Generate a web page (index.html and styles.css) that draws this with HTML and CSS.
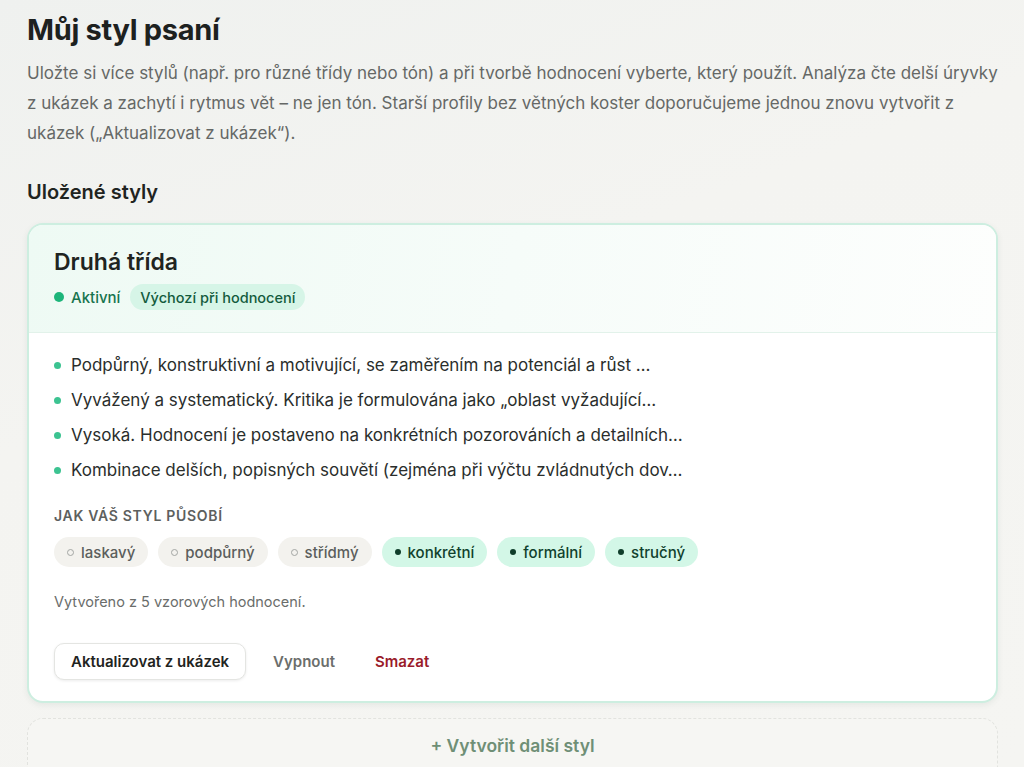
FILE: index.html
```html
<!DOCTYPE html>
<html lang="cs">
<head>
<meta charset="utf-8">
<title>Můj styl psaní</title>
<link rel="stylesheet" href="styles.css">
</head>
<body>
<main class="page">
  <h1 class="title">Můj styl psaní</h1>
  <p class="intro">Uložte si více stylů (např. pro různé třídy nebo tón) a při tvorbě hodnocení vyberte, který použít. Analýza čte delší úryvky z ukázek a zachytí i rytmus vět – ne jen tón. Starší profily bez větných koster doporučujeme jednou znovu vytvořit z ukázek („Aktualizovat z ukázek“).</p>

  <h2 class="section-title">Uložené styly</h2>

  <section class="card">
    <header class="card-head">
      <h3 class="card-title">Druhá třída</h3>
      <div class="status-row">
        <span class="status"><span class="status-dot"></span>Aktivní</span>
        <span class="badge">Výchozí při hodnocení</span>
      </div>
    </header>
    <div class="card-body">
      <ul class="traits">
        <li>Podpůrný, konstruktivní a motivující, se zaměřením na potenciál a růst …</li>
        <li>Vyvážený a systematický. Kritika je formulována jako „oblast vyžadující…</li>
        <li>Vysoká. Hodnocení je postaveno na konkrétních pozorováních a detailních…</li>
        <li>Kombinace delších, popisných souvětí (zejména při výčtu zvládnutých dov…</li>
      </ul>
      <div class="effect-label">Jak váš styl působí</div>
      <div class="chips">
        <span class="chip"><span class="mark"></span>laskavý</span>
        <span class="chip"><span class="mark"></span>podpůrný</span>
        <span class="chip"><span class="mark"></span>střídmý</span>
        <span class="chip on"><span class="mark"></span>konkrétní</span>
        <span class="chip on"><span class="mark"></span>formální</span>
        <span class="chip on"><span class="mark"></span>stručný</span>
      </div>
      <p class="meta">Vytvořeno z 5 vzorových hodnocení.</p>
      <div class="actions">
        <button class="btn-primary" type="button">Aktualizovat z ukázek</button>
        <button class="btn-text" type="button">Vypnout</button>
        <button class="btn-text danger" type="button">Smazat</button>
      </div>
    </div>
  </section>

  <div class="add-box">+ Vytvořit další styl</div>
</main>
</body>
</html>
```

FILE: styles.css
```css
* { box-sizing: border-box; }
html, body { margin: 0; padding: 0; }
body {
  background: linear-gradient(160deg, #eff1ef 0%, #f4f4f1 40%, #f5f5f2 100%);
  font-family: Inter, "Noto Sans", sans-serif;
  color: #1f2421;
  height: 767px;
  overflow: hidden;
}
.page { padding: 11px 26px 0 27px; }
.title {
  margin: 0;
  font-size: 29px;
  font-weight: 700;
  letter-spacing: -0.3px;
  line-height: 38px;
  color: #1d211f;
}
.intro {
  margin: 9px 0 0;
  font-size: 17px;
  line-height: 30px;
  color: #656866;
}
.section-title {
  margin: 31px 0 0;
  font-size: 20px;
  font-weight: 600;
  line-height: 26px;
  color: #1f2421;
}
.card {
  margin-top: 18px;
  background: #fff;
  border: 2px solid #cdeee0;
  border-radius: 16px;
  box-shadow: 0 2px 6px rgba(40, 80, 60, 0.08);
  overflow: hidden;
}
.card-head {
  padding: 22px 25px 22px;
  background: linear-gradient(100deg, #eefaf4 0%, #f6fcf9 50%, #fdfefd 100%);
  border-bottom: 1px solid #e2f2ea;
}
.card-title {
  margin: 0;
  font-size: 23px;
  font-weight: 600;
  line-height: 30px;
  color: #1f2421;
}
.status-row {
  display: flex;
  align-items: center;
  gap: 10px;
  margin-top: 7px;
}
.status {
  display: flex;
  align-items: center;
  gap: 7px;
  font-size: 15px;
  font-weight: 500;
  color: #17744e;
}
.status-dot {
  width: 10px;
  height: 10px;
  border-radius: 50%;
  background: #1db57a;
}
.badge {
  height: 26px;
  display: flex;
  align-items: center;
  padding: 0 10px;
  border-radius: 999px;
  background: #d6f5e7;
  color: #135b3d;
  font-size: 14.5px;
  font-weight: 500;
}
.card-body { padding: 15px 25px 21px; }
.traits {
  list-style: none;
  margin: 0;
  padding: 0;
}
.traits li {
  position: relative;
  padding-left: 17px;
  font-size: 17px;
  line-height: 35px;
  color: #2a2e2c;
  white-space: nowrap;
}
.traits li::before {
  content: "";
  position: absolute;
  left: 0;
  top: 14px;
  width: 7px;
  height: 7px;
  border-radius: 50%;
  background: #3cc391;
}
.effect-label {
  margin-top: 19px;
  font-size: 14px;
  font-weight: 600;
  letter-spacing: 0.7px;
  text-transform: uppercase;
  color: #5d605e;
  line-height: 18px;
}
.chips {
  display: flex;
  gap: 10px;
  margin-top: 12px;
}
.chip {
  padding: 0 13px;
  height: 30px;
  display: flex;
  align-items: center;
  gap: 7px;
  border-radius: 999px;
  background: #f3f2ee;
  color: #5b5e5c;
  font-size: 15px;
  font-weight: 500;
}
.chip .mark {
  width: 7px;
  height: 7px;
  border-radius: 50%;
  border: 1px solid #a3a6a4;
}
.chip.on {
  background: #d3f7e7;
  color: #10412d;
}
.chip.on .mark {
  border: none;
  width: 6px;
  height: 6px;
  background: #0f3d2a;
}
.meta {
  margin: 26px 0 0;
  font-size: 14.5px;
  line-height: 18px;
  color: #6a6d6b;
}
.actions {
  display: flex;
  align-items: center;
  margin-top: 32px;
}
.btn-primary {
  font-family: inherit;
  font-size: 15px;
  font-weight: 600;
  color: #1f2421;
  background: #fff;
  border: 1px solid #e4e5e2;
  border-radius: 10px;
  height: 37px;
  padding: 0 16px;
  margin-right: 7px;
  box-shadow: 0 1px 3px rgba(0, 0, 0, 0.08);
}
.btn-text {
  font-family: inherit;
  font-size: 15px;
  font-weight: 600;
  color: #6b6e6c;
  background: none;
  border: none;
  padding: 0 20px;
}
.btn-text.danger { color: #9a1b2b; }
.add-box {
  margin-top: 15px;
  height: 64px;
  border: 1.5px dashed #e2e3df;
  border-radius: 16px;
  background: #f6f6f3;
  text-align: center;
  padding-top: 15px;
  font-size: 17.5px;
  font-weight: 600;
  line-height: 24px;
  color: #6f8f76;
}
```
